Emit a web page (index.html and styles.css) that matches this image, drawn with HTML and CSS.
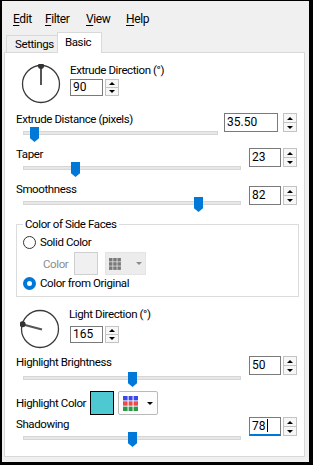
FILE: index.html
```html
<!DOCTYPE html>
<html lang="en">

<head>
  <meta charset="UTF-8">
  <title>Extrude</title>
  <link rel="stylesheet" href="styles.css">
</head>

<body>
  <div class="window">
    <div class="menubar">
      <span class="m1"><u>E</u>dit</span>
      <span class="m2"><u>F</u>ilter</span>
      <span class="m3"><u>V</u>iew</span>
      <span><u>H</u>elp</span>
    </div>

    <div class="tabs">
      <div class="tab">Settings</div>
      <div class="tab active">Basic</div>
    </div>

    <div class="panel">
      <!-- extrude direction dial -->
      <div class="dialrow">
        <svg class="dial" width="40" height="40" viewBox="0 0 40 40">
          <circle cx="20" cy="20" r="18.5" fill="none" stroke="#3a3a3a" stroke-width="1.3" />
          <line x1="20" y1="2" x2="20" y2="21" stroke="#555" stroke-width="2" />
          <circle cx="20" cy="2" r="3" fill="#333" />
        </svg>
        <div class="dialinfo">
          <div class="lbl">Extrude Direction (°)</div>
          <div class="spin small">
            <div class="field">90</div>
            <div class="btns"><span><i class="up"></i></span><span><i class="dn"></i></span></div>
          </div>
        </div>
      </div>

      <div class="srow first">
        <div class="scol">
          <div class="lbl">Extrude Distance (pixels)</div>
          <div class="slider short">
            <div class="track"></div>
            <div class="thumb" style="left: 7px"></div>
          </div>
        </div>
        <div class="spin">
          <div class="field wide">35.50</div>
          <div class="btns"><span><i class="up"></i></span><span><i class="dn"></i></span></div>
        </div>
      </div>

      <div class="srow">
        <div class="scol">
          <div class="lbl">Taper</div>
          <div class="slider">
            <div class="track"></div>
            <div class="thumb" style="left: 48px"></div>
          </div>
        </div>
        <div class="spin">
          <div class="field">23</div>
          <div class="btns"><span><i class="up"></i></span><span><i class="dn"></i></span></div>
        </div>
      </div>

      <div class="srow">
        <div class="scol">
          <div class="lbl">Smoothness</div>
          <div class="slider">
            <div class="track"></div>
            <div class="thumb" style="left: 171px"></div>
          </div>
        </div>
        <div class="spin low">
          <div class="field">82</div>
          <div class="btns"><span><i class="up"></i></span><span><i class="dn"></i></span></div>
        </div>
      </div>

      <fieldset class="group">
        <legend>Color of Side Faces</legend>
        <div class="radio"><span class="dot"></span>Solid Color</div>
        <div class="colorpick">
          <span class="off">Color</span>
          <span class="swatch"></span>
          <span class="gridbtn">
            <svg width="12" height="12" viewBox="0 0 12 12">
              <rect x="0" y="0" width="3.5" height="3.5" fill="#7a7a7a" />
              <rect x="4.2" y="0" width="3.5" height="3.5" fill="#7a7a7a" />
              <rect x="8.4" y="0" width="3.5" height="3.5" fill="#7a7a7a" />
              <rect x="0" y="4.2" width="3.5" height="3.5" fill="#7a7a7a" />
              <rect x="4.2" y="4.2" width="3.5" height="3.5" fill="#7a7a7a" />
              <rect x="8.4" y="4.2" width="3.5" height="3.5" fill="#7a7a7a" />
              <rect x="0" y="8.4" width="3.5" height="3.5" fill="#7a7a7a" />
              <rect x="4.2" y="8.4" width="3.5" height="3.5" fill="#7a7a7a" />
              <rect x="8.4" y="8.4" width="3.5" height="3.5" fill="#7a7a7a" />
            </svg>
            <i class="caret grey"></i>
          </span>
        </div>
        <div class="radio on"><span class="dot"></span>Color from Original</div>
      </fieldset>

      <!-- light direction dial -->
      <div class="dialrow second">
        <svg class="dial" width="40" height="40" viewBox="0 0 40 40">
          <circle cx="20" cy="20" r="18.5" fill="none" stroke="#3a3a3a" stroke-width="1.3" />
          <line x1="2.1" y1="15.2" x2="22" y2="20.5" stroke="#555" stroke-width="2" />
          <circle cx="2.6" cy="15.3" r="3" fill="#333" />
        </svg>
        <div class="dialinfo">
          <div class="lbl">Light Direction (°)</div>
          <div class="spin small">
            <div class="field">165</div>
            <div class="btns"><span><i class="up"></i></span><span><i class="dn"></i></span></div>
          </div>
        </div>
      </div>

      <div class="srow bright">
        <div class="scol">
          <div class="lbl">Highlight Brightness</div>
          <div class="slider">
            <div class="track"></div>
            <div class="thumb" style="left: 105px"></div>
          </div>
        </div>
        <div class="spin">
          <div class="field">50</div>
          <div class="btns"><span><i class="up"></i></span><span><i class="dn"></i></span></div>
        </div>
      </div>

      <div class="crow">
        <div class="lbl">Highlight Color</div>
        <span class="swatch on"></span>
        <span class="colorbtn">
          <svg width="15" height="15" viewBox="0 0 15 15">
            <rect x="0" y="0" width="15" height="4.4" fill="#3d46e8" />
            <rect x="0" y="5.3" width="15" height="4.4" fill="#f2474c" />
            <rect x="0" y="10.6" width="15" height="4.4" fill="#2c9a46" />
            <rect x="4.6" y="0" width="1" height="15" fill="#fff" />
            <rect x="9.6" y="0" width="1" height="15" fill="#fff" />
          </svg>
          <i class="caret"></i>
        </span>
      </div>

      <div class="srow shadow">
        <div class="scol">
          <div class="lbl">Shadowing</div>
          <div class="slider">
            <div class="track"></div>
            <div class="thumb" style="left: 105px"></div>
          </div>
        </div>
        <div class="spin">
          <div class="field focus">78<span class="cursor"></span></div>
          <div class="btns"><span><i class="up"></i></span><span><i class="dn"></i></span></div>
        </div>
      </div>
    </div>
  </div>
</body>

</html>
```

FILE: styles.css
```css
* {
  box-sizing: border-box;
}

body {
  margin: 0;
  font-family: Roboto, "Liberation Sans", sans-serif;
  font-size: 11.5px;
  letter-spacing: -0.4px;
  color: #000;
}

.window {
  width: 313px;
  height: 465px;
  display: flex;
  flex-direction: column;
  background: #f0f0f0;
  border-style: solid;
  border-color: #000;
  border-width: 1px 4px 3px 2px;
}

.menubar {
  flex-shrink: 0;
  height: 31px;
  display: flex;
  padding: 11px 0 0 11px;
  font-size: 12px;
  line-height: 14px;
}

.menubar .m1 {
  width: 32px;
}

.menubar .m2 {
  width: 41px;
}

.menubar .m3 {
  width: 40px;
}

.menubar u {
  text-underline-offset: 2px;
}

.tabs {
  flex-shrink: 0;
  height: 20px;
  display: flex;
  align-items: flex-end;
  padding-left: 4px;
}

.tab {
  width: 52px;
  height: 17px;
  padding-left: 8px;
  line-height: 16px;
  background: #f0f0f0;
  border: 1px solid #d9d9d9;
  border-bottom: none;
}

.tab.active {
  position: relative;
  z-index: 1;
  width: 45px;
  height: 21px;
  margin-left: -1px;
  margin-bottom: -1px;
  padding-left: 7px;
  line-height: 19px;
  background: #fff;
}

.panel {
  flex: 1;
  min-height: 0;
  margin: 0 4px 5px 2px;
  background: #fff;
  border: 1px solid #d9d9d9;
}

.lbl {
  line-height: 14px;
  white-space: nowrap;
}

/* dials */
.dialrow {
  display: flex;
  margin-top: 10px;
  padding-left: 16px;
}

.dial {
  display: block;
  margin-top: 1px;
}

.dialinfo {
  margin-left: 9px;
}

.dialinfo .spin {
  margin-top: 2px;
}

.dialrow.second {
  margin-top: 10px;
  padding-left: 15px;
}

.dialrow.second .dial {
  margin-top: 2px;
}

.dialrow.second .spin {
  margin-top: 5px;
  margin-left: 1px;
}

/* spin boxes */
.spin {
  display: flex;
  gap: 2px;
}

.field {
  width: 32px;
  height: 19px;
  padding-left: 2px;
  font-size: 12px;
  letter-spacing: 0;
  line-height: 17px;
  background: #fff;
  border: 1px solid #7a7a7a;
}

.field.wide {
  width: 54px;
  margin-right: 3px;
}

.field.focus {
  border-bottom: 2px solid #0078d7;
}

.cursor {
  display: inline-block;
  width: 1px;
  height: 13px;
  margin-left: 1px;
  vertical-align: -2px;
  background: #000;
}

.spin.small .field {
  width: 33px;
  height: 17px;
  line-height: 15px;
}

.btns {
  width: 14px;
  display: flex;
  flex-direction: column;
  background: #f7f7f7;
  border: 1px solid #c3c3c3;
}

.btns span {
  flex: 1;
  display: flex;
  align-items: center;
  justify-content: center;
}

.btns span + span {
  border-top: 1px solid #c3c3c3;
}

.up {
  border-left: 3px solid transparent;
  border-right: 3px solid transparent;
  border-bottom: 3px solid #000;
}

.dn {
  border-left: 3px solid transparent;
  border-right: 3px solid transparent;
  border-top: 3px solid #000;
}

/* slider rows */
.srow {
  display: flex;
  align-items: flex-start;
  margin-top: 4px;
  padding-right: 7px;
}

.srow.first {
  margin-top: 8px;
}

.srow.bright {
  margin-top: 6px;
}

.srow.shadow {
  margin-top: 2px;
}

.srow .spin {
  margin-top: 1px;
}

.srow .spin.low {
  margin-top: 4px;
}

.srow.shadow .spin {
  margin-top: 0;
}

.scol {
  flex: 1;
  padding-left: 11px;
}

.slider {
  position: relative;
  width: 218px;
  height: 16px;
  margin: 1px 0 0 7px;
  padding-top: 4px;
}

.slider.short {
  width: 195px;
}

.srow.bright .slider {
  margin-top: 3px;
}

.track {
  height: 4px;
  background: #e7e7e7;
  border: 1px solid #d6d6d6;
}

.thumb {
  position: absolute;
  top: 0;
  width: 9px;
  height: 15px;
  background: #0078d7;
  clip-path: polygon(0 0, 100% 0, 100% 75%, 50% 100%, 0 75%);
}

/* group box */
.group {
  width: 283px;
  min-width: 0;
  margin: 4px 0 0 11px;
  padding: 0 0 6px 6px;
  border: 1px solid #dcdcdc;
}

.group legend {
  padding: 0 2px;
  line-height: 14px;
}

.radio {
  display: flex;
  align-items: center;
  margin-top: 4px;
  line-height: 14px;
}

.radio.on {
  margin-top: 1px;
}

.dot {
  width: 13px;
  height: 13px;
  margin-right: 4px;
  background: #fff;
  border: 1px solid #333;
  border-radius: 50%;
}

.radio.on .dot {
  border: 4px solid #0078d7;
}

.colorpick {
  display: flex;
  align-items: center;
  margin-top: 3px;
  padding-left: 20px;
}

.off {
  width: 31px;
  color: #8d8d8d;
}

.swatch {
  width: 24px;
  height: 23px;
  background: #f0f0f0;
  border: 1px solid #cfcfcf;
}

.gridbtn {
  width: 41px;
  height: 23px;
  margin-left: 7px;
  display: flex;
  align-items: center;
  padding-left: 3px;
  background: #ececec;
  border: 1px solid #e4e4e4;
}

.caret {
  margin-left: 6px;
  border-left: 3px solid transparent;
  border-right: 3px solid transparent;
  border-top: 3px solid #000;
}

.caret.grey {
  margin-left: 15px;
  border-top-color: #8a8a8a;
}

/* highlight color */
.crow {
  display: flex;
  align-items: center;
  margin-top: 3px;
  padding-left: 11px;
}

.crow .lbl {
  width: 74px;
}

.swatch.on {
  height: 24px;
  background: #4ec9d1;
  border: 1px solid #000;
}

.colorbtn {
  width: 40px;
  height: 24px;
  margin-left: 4px;
  display: flex;
  align-items: center;
  padding-left: 4px;
  background: #fdfdfd;
  border: 1px solid #b9b9b9;
  border-radius: 2px;
}

.colorbtn .caret {
  margin-left: 9px;
}
```
